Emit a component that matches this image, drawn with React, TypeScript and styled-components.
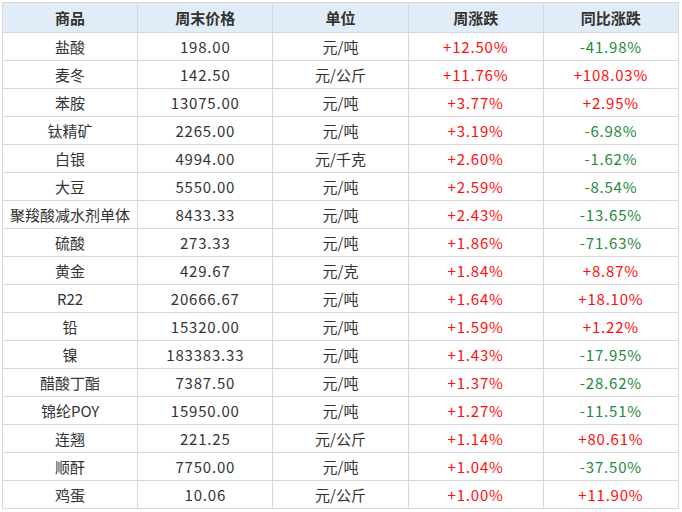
import { createGlobalStyle } from "styled-components";
import styled from "styled-components";

const GlobalStyle = createGlobalStyle`
  html, body {
    margin: 0;
    padding: 0;
    background: #ffffff;
  }
  body {
    font-family: "Noto Sans CJK SC", "Noto Sans", sans-serif;
  }
`;

interface Row {
  name: string;
  price: string;
  unit: string;
  week: string;
  yoy: string;
}

const rows: Row[] = [
  { name: "盐酸", price: "198.00", unit: "元/吨", week: "+12.50%", yoy: "-41.98%" },
  { name: "麦冬", price: "142.50", unit: "元/公斤", week: "+11.76%", yoy: "+108.03%" },
  { name: "苯胺", price: "13075.00", unit: "元/吨", week: "+3.77%", yoy: "+2.95%" },
  { name: "钛精矿", price: "2265.00", unit: "元/吨", week: "+3.19%", yoy: "-6.98%" },
  { name: "白银", price: "4994.00", unit: "元/千克", week: "+2.60%", yoy: "-1.62%" },
  { name: "大豆", price: "5550.00", unit: "元/吨", week: "+2.59%", yoy: "-8.54%" },
  { name: "聚羧酸减水剂单体", price: "8433.33", unit: "元/吨", week: "+2.43%", yoy: "-13.65%" },
  { name: "硫酸", price: "273.33", unit: "元/吨", week: "+1.86%", yoy: "-71.63%" },
  { name: "黄金", price: "429.67", unit: "元/克", week: "+1.84%", yoy: "+8.87%" },
  { name: "R22", price: "20666.67", unit: "元/吨", week: "+1.64%", yoy: "+18.10%" },
  { name: "铅", price: "15320.00", unit: "元/吨", week: "+1.59%", yoy: "+1.22%" },
  { name: "镍", price: "183383.33", unit: "元/吨", week: "+1.43%", yoy: "-17.95%" },
  { name: "醋酸丁酯", price: "7387.50", unit: "元/吨", week: "+1.37%", yoy: "-28.62%" },
  { name: "锦纶POY", price: "15950.00", unit: "元/吨", week: "+1.27%", yoy: "-11.51%" },
  { name: "连翘", price: "221.25", unit: "元/公斤", week: "+1.14%", yoy: "+80.61%" },
  { name: "顺酐", price: "7750.00", unit: "元/吨", week: "+1.04%", yoy: "-37.50%" },
  { name: "鸡蛋", price: "10.06", unit: "元/公斤", week: "+1.00%", yoy: "+11.90%" },
];

const Page = styled.div`
  padding: 2px 0 0 2px;
`;

const Table = styled.table`
  width: 677px;
  border-collapse: collapse;
  table-layout: fixed;
  font-size: 15px;
  color: #333333;
`;

const HeadCell = styled.th`
  height: 29px;
  padding: 0;
  border: 1px solid #d8d8d8;
  background: #e1ecf9;
  font-weight: 700;
  text-align: center;
  color: #333333;
`;

const Cell = styled.td<{ $tone?: "up" | "down"; $num?: boolean }>`
  height: 27px;
  padding: 0;
  border: 1px solid #d8d8d8;
  text-align: center;
  white-space: nowrap;
  letter-spacing: ${({ $num }) => ($num ? "0.8px" : "0")};
  color: ${({ $tone }) =>
    $tone === "up" ? "#ff0d0d" : $tone === "down" ? "#1e8a3c" : "#333333"};
`;

const tone = (v: string) => (v.startsWith("-") ? "down" : "up");

export default function App() {
  return (
    <Page>
      <GlobalStyle />
      <Table>
        <thead>
          <tr>
            <HeadCell>商品</HeadCell>
            <HeadCell>周末价格</HeadCell>
            <HeadCell>单位</HeadCell>
            <HeadCell>周涨跌</HeadCell>
            <HeadCell>同比涨跌</HeadCell>
          </tr>
        </thead>
        <tbody>
          {rows.map((r) => (
            <tr key={r.name}>
              <Cell>{r.name}</Cell>
              <Cell $num>{r.price}</Cell>
              <Cell>{r.unit}</Cell>
              <Cell $num $tone={tone(r.week)}>{r.week}</Cell>
              <Cell $num $tone={tone(r.yoy)}>{r.yoy}</Cell>
            </tr>
          ))}
        </tbody>
      </Table>
    </Page>
  );
}
